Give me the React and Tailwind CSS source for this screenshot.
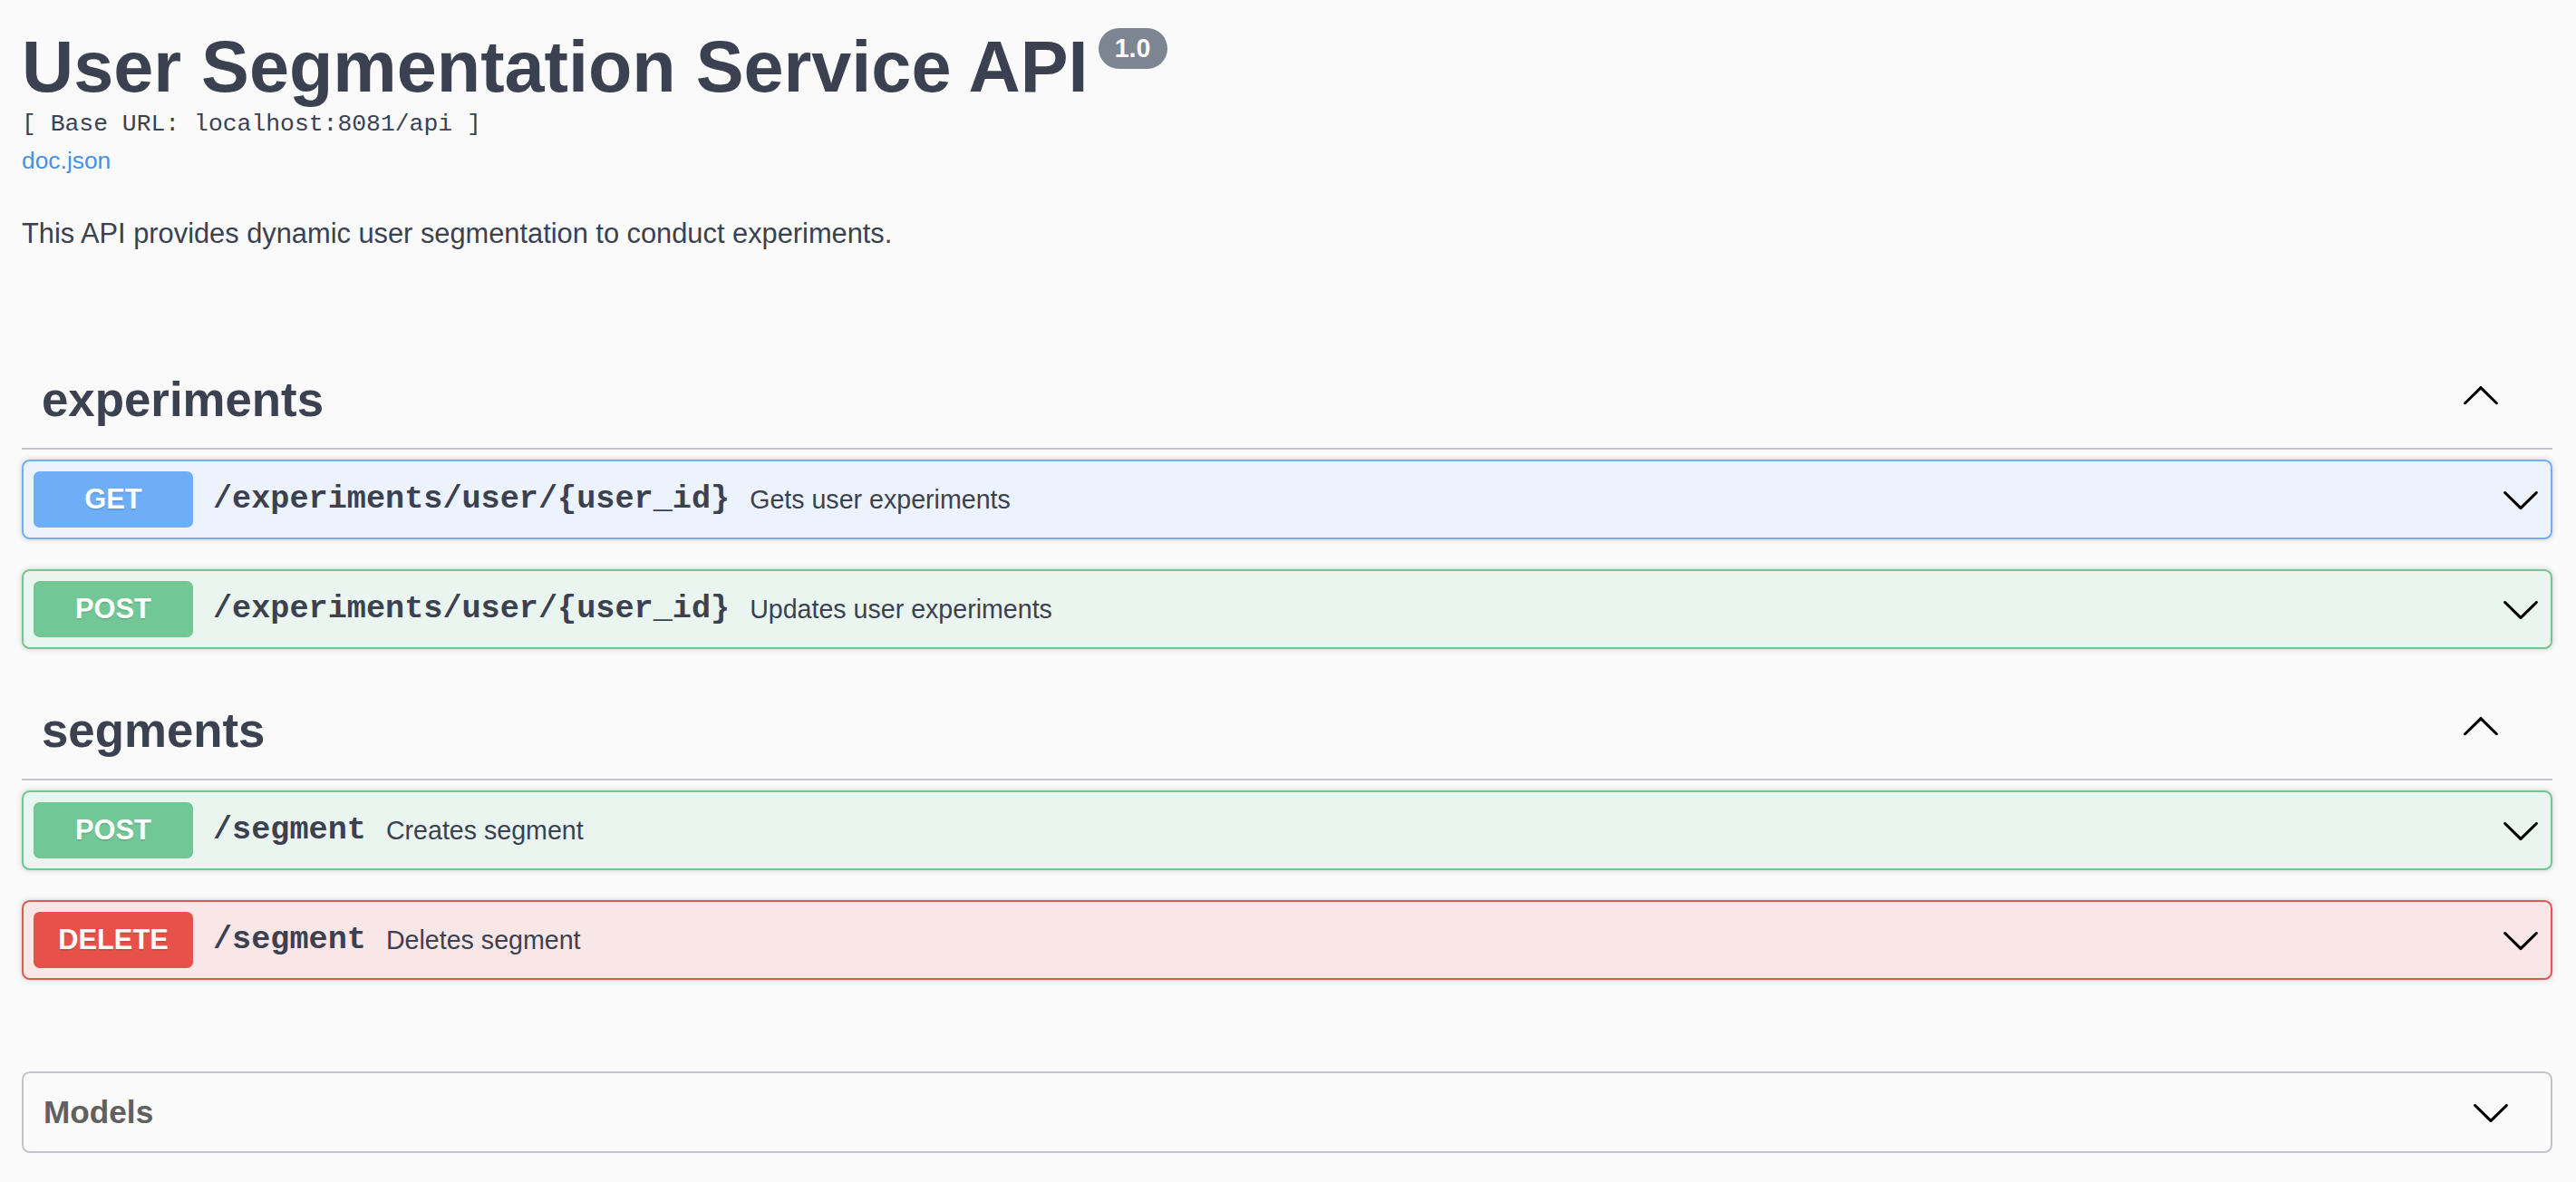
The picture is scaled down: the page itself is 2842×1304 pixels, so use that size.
import React from 'react';

const sans = "font-['Liberation_Sans',Arial,sans-serif]";
const mono = "font-['Liberation_Mono','Courier_New',monospace]";

const ArrowDown = ({ className = '' }) => (
    <svg width="44" height="44" viewBox="0 0 20 20" className={className} aria-hidden="true">
        <path
            fill="#000"
            d="M17.418 6.109c.272-.268.709-.268.979 0s.271.701 0 .969l-7.908 7.83c-.27.268-.707.268-.979 0l-7.908-7.83c-.27-.268-.27-.701 0-.969.271-.268.709-.268.979 0L10 13.25l7.418-7.141z"
        />
    </svg>
);

const ArrowUp = ({ className = '' }) => (
    <svg width="44" height="44" viewBox="0 0 20 20" className={className} aria-hidden="true">
        <path
            fill="#000"
            d="M17.418 14.908c.272.268.709.268.979 0s.271-.701 0-.969l-7.908-7.83c-.27-.268-.707-.268-.979 0l-7.908 7.83c-.27.268-.27.701 0 .969.271.268.709.268.979 0L10 7.767l7.418 7.141z"
        />
    </svg>
);

// colour sets per http method
const METHODS = {
    GET: { box: 'border-[#73aef0] bg-[#ecf3fc]', badge: 'bg-[#6daef7]' },
    POST: { box: 'border-[#74c596] bg-[#ebf5ef]', badge: 'bg-[#72c796]' },
    DELETE: { box: 'border-[#df5a53] bg-[#f9e7e7]', badge: 'bg-[#e7514a]' },
};

const tags = [
    {
        name: 'experiments',
        ops: [
            { method: 'GET', path: '/experiments/user/{user_id}', summary: 'Gets user experiments' },
            { method: 'POST', path: '/experiments/user/{user_id}', summary: 'Updates user experiments' },
        ],
    },
    {
        name: 'segments',
        ops: [
            { method: 'POST', path: '/segment', summary: 'Creates segment' },
            { method: 'DELETE', path: '/segment', summary: 'Deletes segment' },
        ],
    },
];

const OpBlock = ({ method, path, summary }) => {
    const c = METHODS[method];
    return (
        <div className={`mb-[33px] rounded-[8.8px] border-2 shadow-[0_0_6.6px_rgba(0,0,0,0.19)] ${c.box}`}>
            <div className="flex items-center p-[11px]">
                <div
                    className={`flex h-[62px] w-[176px] shrink-0 items-center justify-center rounded-[6.6px] text-[30.8px] font-bold text-white [text-shadow:0_2px_0_rgba(0,0,0,0.1)] ${sans} ${c.badge}`}
                >
                    {method}
                </div>
                <span className={`px-[22px] text-[35.2px] font-bold text-[#3b4151] ${mono}`}>{path}</span>
                <span className={`flex-1 text-[28.6px] text-[#3b4151] ${sans}`}>{summary}</span>
                <ArrowDown className="shrink-0" />
            </div>
        </div>
    );
};

export default function App() {
    return (
        <div className={`min-h-screen bg-[#fafafa] pb-[40px] pl-[24px] pr-[26px] pt-[28px] ${sans}`}>
            {/* info */}
            <h2 className="text-[79.2px] font-bold leading-[91px] text-[#3b4151]">
                User Segmentation Service API
                <span className="ml-[11px] mt-[3px] inline-flex h-[45px] w-[76px] items-center justify-center rounded-full bg-[#7d8492] align-top text-[28.6px] font-bold leading-none text-[#fafafa]">
                    1.0
                </span>
            </h2>
            <pre className={`mt-[3px] text-[26.4px] leading-[30px] text-[#3b4151] ${mono}`}>[ Base URL: localhost:8081/api ]</pre>
            <a href="#" className="mt-[10px] block text-[26.4px] leading-[30px] text-[#4990e2]">
                doc.json
            </a>
            <p className="mt-[48px] text-[30.8px] leading-[35px] text-[#3b4151]">
                This API provides dynamic user segmentation to conduct experiments.
            </p>

            {/* tags */}
            <div className="mt-[113px] flex flex-col">
                {tags.map((tag) => (
                    <div key={tag.name} className="mb-[4px] flex flex-col">
                        <h3 className="mb-[11px] flex items-center border-b-2 border-[#c3c4c8] py-[22px] pl-[22px] pr-[57px]">
                            <span className="flex-1 text-[52.8px] font-bold leading-[62px] text-[#3b4151]">{tag.name}</span>
                            <ArrowUp className="mb-[12px] shrink-0" />
                        </h3>
                        {tag.ops.map((op, i) => (
                            <OpBlock key={i} {...op} />
                        ))}
                    </div>
                ))}
            </div>

            {/* models */}
            <section className="mt-[64px] rounded-[8.8px] border-2 border-[#c3c4c8]">
                <h4 className="flex items-center py-[22px] pl-[22px] pr-[44px]">
                    <span className="flex-1 text-[35.2px] font-bold leading-[42px] text-[#606060]">Models</span>
                    <ArrowDown className="-my-[1px] shrink-0" />
                </h4>
            </section>
        </div>
    );
}
